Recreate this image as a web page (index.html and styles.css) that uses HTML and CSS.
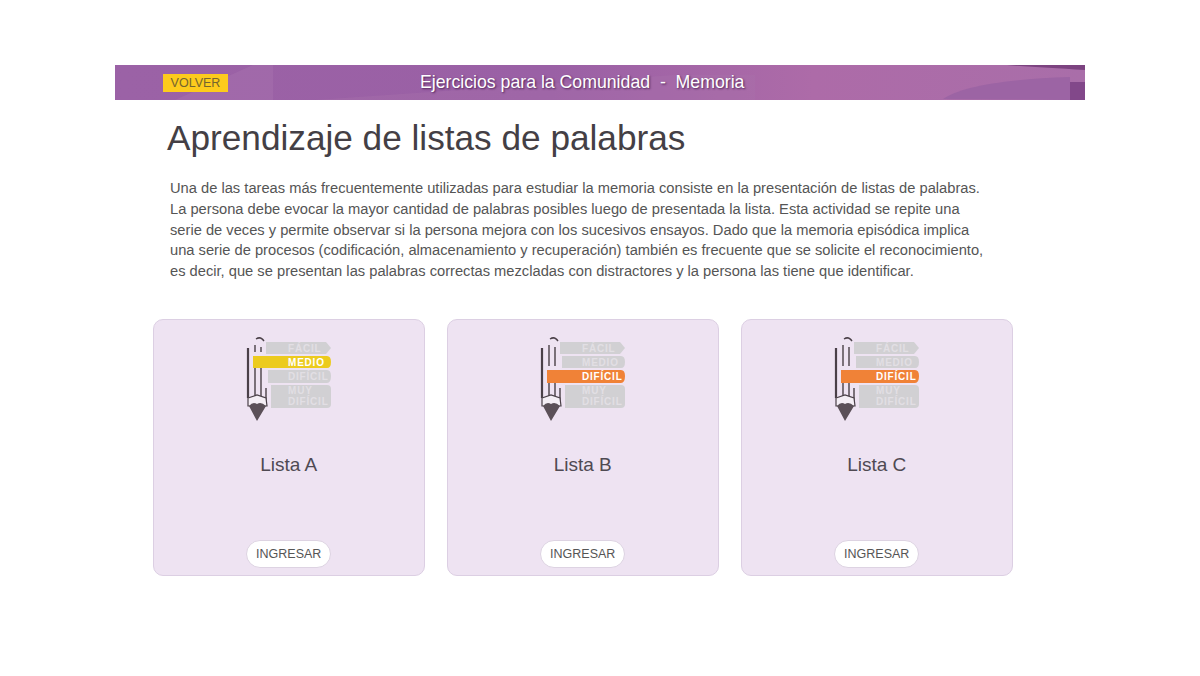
FILE: index.html

```html
<!DOCTYPE html>
<html lang="es">
<head>
    <meta charset="UTF-8">
    <title>Aprendizaje de listas de palabras</title>
    <link rel="stylesheet" href="styles.css">
</head>
<body>
    <div class="page">
        <header class="banner">
            <svg class="banner-deco" viewBox="0 0 970 35" preserveAspectRatio="none" aria-hidden="true">
                <path d="M60 35 L138 0 L158 0 L158 35 Z" fill="#a873b0" opacity="0.45"/>
                <path d="M200 35 L560 10 L640 10 L640 35 Z" fill="#a873ad" opacity="0.35"/>
                <path d="M828 34 C845 22 890 14 955 12 L955 35 Z" fill="#9c64a4"/>
                <path d="M892 0 L970 0 L970 5 C940 3 915 2 892 0 Z" fill="#7c4380"/>
                <rect x="955" y="17" width="15" height="18" fill="#82488a"/>
            </svg>
            <a class="back-btn" href="#">VOLVER</a>
            <div class="banner-title">Ejercicios para la Comunidad &nbsp;-&nbsp; Memoria</div>
        </header>

        <h1>Aprendizaje de listas de palabras</h1>

        <p class="intro">Una de las tareas más frecuentemente utilizadas para estudiar la memoria consiste en la presentación de listas de palabras.<br>
        La persona debe evocar la mayor cantidad de palabras posibles luego de presentada la lista. Esta actividad se repite una<br>
        serie de veces y permite observar si la persona mejora con los sucesivos ensayos. Dado que la memoria episódica implica<br>
        una serie de procesos (codificación, almacenamiento y recuperación) también es frecuente que se solicite el reconocimiento,<br>
        es decir, que se presentan las palabras correctas mezcladas con distractores y la persona las tiene que identificar.</p>

        <div class="cards">
            <div class="card">
                <svg class="level-icon" viewBox="0 0 90 90" aria-hidden="true">
                    <path class="bar" d="M22 8 H82 L87 14 L82 20 H22 Z"/>
                    <path class="pencil thick" d="M4 64 V14"/>
                    <path class="pencil" d="M11 11 V18 M17 13 V18 M11 34 V64 M17 34 V62 M22 54 V68"/>
                    <path class="pencil" d="M12 5 C15 3 18 4 20 7"/>
                    <path class="bar medio" d="M9 22 H83 Q87 22 87 28 Q87 34 83 34 H9 Z"/>
                    <path class="bar" d="M24 36 H83 Q87 36 87 42 Q87 49 83 49 H24 Z"/>
                    <path class="bar" d="M27 51 H83 Q87 51 87 55 V70 Q87 74 83 74 H27 Z"/>
                    <path class="tip-wood" d="M4 64 L13 61 L22 64 L23 72 H4 Z"/>
                    <path class="tip" d="M5 72 Q9 67 13 70 Q17 67 22 72 L13 87 Z"/>
                    <text x="44" y="18" class="lbl">FÁCIL</text>
                    <text x="44" y="32" class="lbl on">MEDIO</text>
                    <text x="44" y="46" class="lbl">DIFÍCIL</text>
                    <text x="44" y="60" class="lbl">MUY</text>
                    <text x="44" y="71" class="lbl">DIFÍCIL</text>
                </svg>
                <div class="card-name">Lista A</div>
                <a class="enter-btn" href="#">INGRESAR</a>
            </div>
            <div class="card">
                <svg class="level-icon" viewBox="0 0 90 90" aria-hidden="true">
                    <path class="bar" d="M22 8 H82 L87 14 L82 20 H22 Z"/>
                    <path class="bar" d="M24 22 H83 Q87 22 87 28 Q87 34 83 34 H24 Z"/>
                    <path class="pencil thick" d="M4 64 V14"/>
                    <path class="pencil" d="M11 11 V32 M17 13 V32 M11 49 V64 M17 49 V62 M22 54 V68"/>
                    <path class="pencil" d="M12 5 C15 3 18 4 20 7"/>
                    <path class="bar dificil" d="M9 36 H83 Q87 36 87 42 Q87 49 83 49 H9 Z"/>
                    <path class="bar" d="M27 51 H83 Q87 51 87 55 V70 Q87 74 83 74 H27 Z"/>
                    <path class="tip-wood" d="M4 64 L13 61 L22 64 L23 72 H4 Z"/>
                    <path class="tip" d="M5 72 Q9 67 13 70 Q17 67 22 72 L13 87 Z"/>
                    <text x="44" y="18" class="lbl">FÁCIL</text>
                    <text x="44" y="32" class="lbl">MEDIO</text>
                    <text x="44" y="46" class="lbl on">DIFÍCIL</text>
                    <text x="44" y="60" class="lbl">MUY</text>
                    <text x="44" y="71" class="lbl">DIFÍCIL</text>
                </svg>
                <div class="card-name">Lista B</div>
                <a class="enter-btn" href="#">INGRESAR</a>
            </div>
            <div class="card">
                <svg class="level-icon" viewBox="0 0 90 90" aria-hidden="true">
                    <path class="bar" d="M22 8 H82 L87 14 L82 20 H22 Z"/>
                    <path class="bar" d="M24 22 H83 Q87 22 87 28 Q87 34 83 34 H24 Z"/>
                    <path class="pencil thick" d="M4 64 V14"/>
                    <path class="pencil" d="M11 11 V32 M17 13 V32 M11 49 V64 M17 49 V62 M22 54 V68"/>
                    <path class="pencil" d="M12 5 C15 3 18 4 20 7"/>
                    <path class="bar dificil" d="M9 36 H83 Q87 36 87 42 Q87 49 83 49 H9 Z"/>
                    <path class="bar" d="M27 51 H83 Q87 51 87 55 V70 Q87 74 83 74 H27 Z"/>
                    <path class="tip-wood" d="M4 64 L13 61 L22 64 L23 72 H4 Z"/>
                    <path class="tip" d="M5 72 Q9 67 13 70 Q17 67 22 72 L13 87 Z"/>
                    <text x="44" y="18" class="lbl">FÁCIL</text>
                    <text x="44" y="32" class="lbl">MEDIO</text>
                    <text x="44" y="46" class="lbl on">DIFÍCIL</text>
                    <text x="44" y="60" class="lbl">MUY</text>
                    <text x="44" y="71" class="lbl">DIFÍCIL</text>
                </svg>
                <div class="card-name">Lista C</div>
                <a class="enter-btn" href="#">INGRESAR</a>
            </div>
        </div>
    </div>
</body>
</html>
```

FILE: styles.css

```css
body {
    margin: 0;
    background-color: #fff;
    color: #4a4a4a;
    font-family: "Liberation Sans", Arial, sans-serif;
}

.page {
    width: 970px;
    margin: 0 auto;
    padding-top: 65px;
}

.banner {
    position: relative;
    display: flex;
    align-items: center;
    height: 35px;
    background: linear-gradient(90deg, #9b62a6 0%, #9a60a5 45%, #ad6ba8 72%, #a96ea9 100%);
}

.banner-deco {
    position: absolute;
    inset: 0;
    width: 100%;
    height: 100%;
}

.back-btn {
    position: relative;
    width: 65px;
    height: 18px;
    margin-left: 48px;
    background-color: #fdcb1c;
    color: #75652f;
    font-size: 12.5px;
    line-height: 18px;
    text-align: center;
    text-decoration: none;
}

.banner-title {
    position: relative;
    margin-left: 192px;
    color: #fff;
    font-size: 17.7px;
    text-shadow: 1px 1px 2px rgba(60, 20, 70, 0.8);
    white-space: nowrap;
}

h1 {
    margin: 16px 0 0 52px;
    color: #443f45;
    font-size: 35.2px;
    font-weight: normal;
    line-height: 44px;
}

.intro {
    width: 860px;
    margin: 18px 0 0 55px;
    color: #555;
    font-size: 14.7px;
    line-height: 20.75px;
}

.cards {
    display: flex;
    gap: 22.5px;
    margin: 37px 0 0 38px;
}

.card {
    box-sizing: border-box;
    display: flex;
    flex-direction: column;
    align-items: center;
    width: 271.5px;
    height: 257px;
    padding: 14px 0 7px;
    background-color: #eee3f2;
    border: 1px solid #dccfe3;
    border-radius: 10px;
}

.level-icon {
    display: block;
    width: 90px;
    height: 90px;
}

.bar {
    fill: #d1d0d3;
}

.bar.medio {
    fill: #eccb1e;
}

.bar.dificil {
    fill: #f08237;
}

.pencil {
    fill: none;
    stroke: #4a4048;
    stroke-width: 1.4;
}

.pencil.thick {
    stroke-width: 2.2;
}

.tip-wood {
    fill: #f4eef5;
    stroke: #4a4048;
    stroke-width: 1.2;
}

.tip {
    fill: #5b5058;
}

.lbl {
    fill: #e2dfe4;
    font-family: "Liberation Sans", Arial, sans-serif;
    font-size: 10px;
    font-weight: bold;
    letter-spacing: 0.8px;
}

.lbl.on {
    fill: #fff;
}

.card-name {
    margin-top: 29px;
    color: #4f4a52;
    font-size: 19px;
    line-height: 24px;
}

.enter-btn {
    box-sizing: border-box;
    width: 85px;
    height: 28px;
    margin-top: auto;
    background-color: #fff;
    border: 1px solid #ddd3e2;
    border-radius: 14px;
    color: #555;
    font-size: 12.5px;
    line-height: 26px;
    text-align: center;
    text-decoration: none;
}
```
